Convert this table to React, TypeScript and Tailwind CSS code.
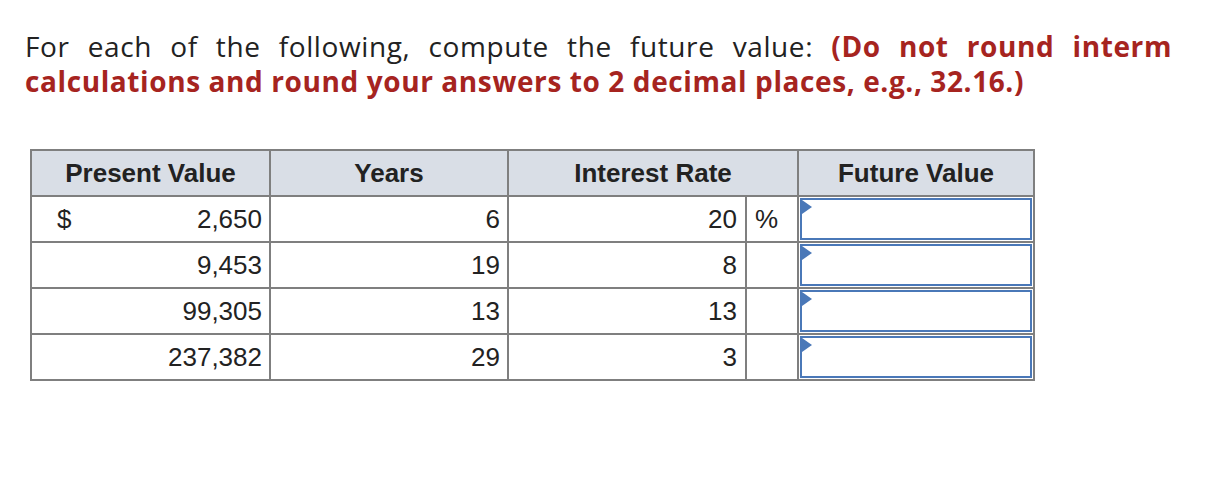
const rows = [
  { pv: "2,650", years: "6", rate: "20", first: true },
  { pv: "9,453", years: "19", rate: "8", first: false },
  { pv: "99,305", years: "13", rate: "13", first: false },
  { pv: "237,382", years: "29", rate: "3", first: false },
];

function AnswerBox() {
  return (
    <div className="relative m-px h-[42px] border-2 border-[#4a78b8] bg-white">
      <div className="absolute left-0 top-0 h-0 w-0 border-y-[7px] border-l-[10px] border-y-transparent border-l-[#4a78b8]" />
    </div>
  );
}

export default function App() {
  return (
    <div className="h-[480px] w-[1206px] bg-white">
      <div className="pl-[25px] pt-[29px] w-[1172px] font-['Open_Sans',sans-serif] text-[28px] leading-[35px] tracking-[0.6px] text-[#222]">
        <p className="text-justify [text-align-last:justify]">
          For each of the following, compute the future value:{" "}
          <b className="font-bold text-[#a6241f]">(Do not round interm</b>
        </p>
        <p className="font-bold text-[#a6241f]">
          calculations and round your answers to 2 decimal places, e.g., 32.16.)
        </p>
      </div>

      <table className="ml-[30px] mt-[50px] border-collapse font-['Liberation_Sans',Arial,sans-serif] text-[26px] text-[#222]">
        <colgroup>
          <col className="w-[239px]" />
          <col className="w-[238px]" />
          <col className="w-[238px]" />
          <col className="w-[52px]" />
          <col className="w-[236px]" />
        </colgroup>
        <thead>
          <tr className="h-[46px] bg-[#d9dee6]">
            <th className="border-2 border-[#7f7f7f] font-bold">Present Value</th>
            <th className="border-2 border-[#7f7f7f] font-bold">Years</th>
            <th colSpan={2} className="border-2 border-[#7f7f7f] font-bold">
              Interest Rate
            </th>
            <th className="border-2 border-[#7f7f7f] font-bold">Future Value</th>
          </tr>
        </thead>
        <tbody>
          {rows.map((r) => (
            <tr key={r.pv} className="h-[46px]">
              <td className="border-2 border-[#7f7f7f] px-[7px]">
                <div className="flex items-center justify-between">
                  <span className="pl-[18px]">{r.first ? "$" : ""}</span>
                  <span>{r.pv}</span>
                </div>
              </td>
              <td className="border-2 border-[#7f7f7f] px-[7px] text-right">{r.years}</td>
              <td className="border-2 border-[#7f7f7f] px-[8px] text-right">{r.rate}</td>
              <td className="border-2 border-[#7f7f7f] px-[8px] text-left">{r.first ? "%" : ""}</td>
              <td className="border-2 border-[#7f7f7f] p-0">
                <AnswerBox />
              </td>
            </tr>
          ))}
        </tbody>
      </table>
    </div>
  );
}
